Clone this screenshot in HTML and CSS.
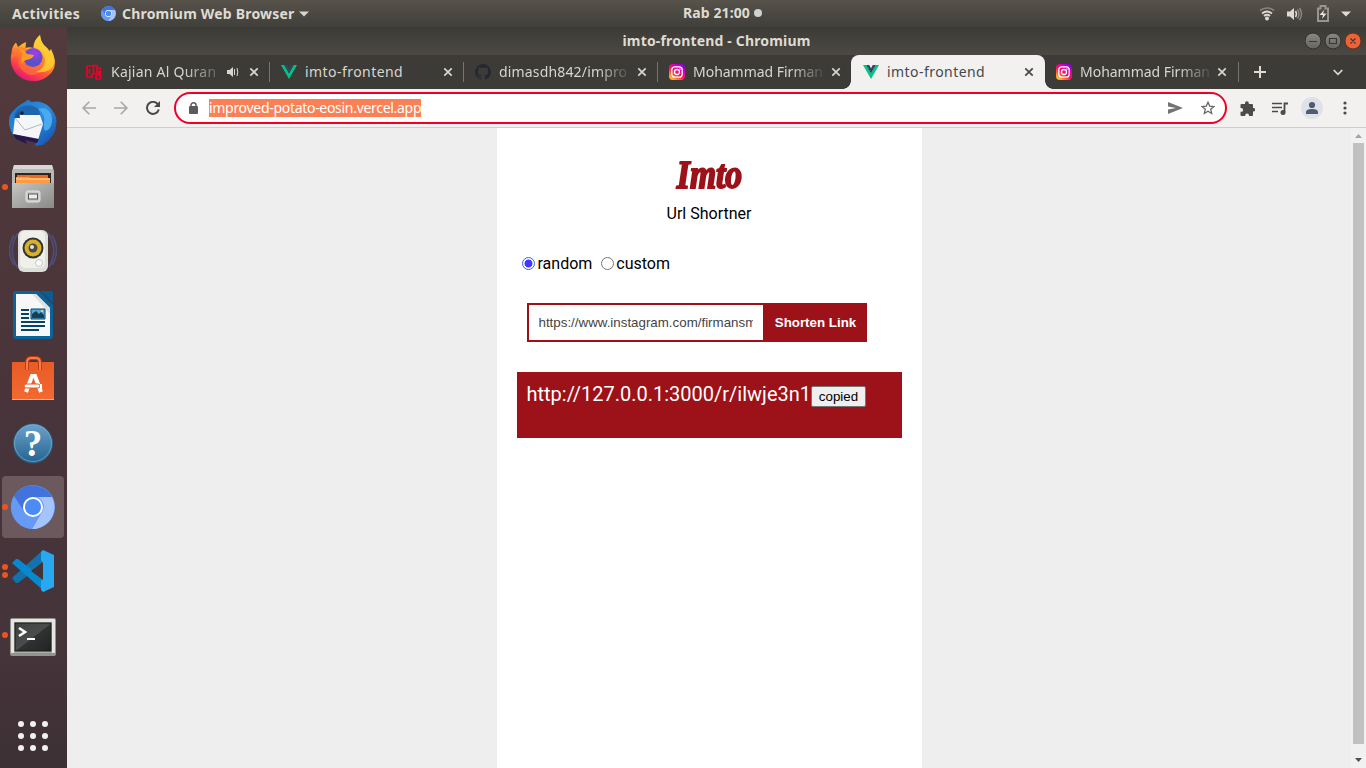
FILE: index.html
```html
<!DOCTYPE html>
<html lang="id">
<head>
<meta charset="utf-8">
<title>imto-frontend</title>
<link rel="stylesheet" href="styles.css">
</head>
<body>
<svg class="defs" width="0" height="0">
  <defs>
    <symbol id="chromium" viewBox="0 0 44 44">
      <circle cx="22" cy="22" r="22" fill="#5b93f5"/>
      <path d="M3 11A22 22 0 0 1 41 12H22a10 10 0 0 0-9 14Z" fill="#4272db"/>
      <path d="M41 12A22 22 0 0 1 21 44L31 27a10 10 0 0 0-5-15Z" fill="#a5c4fb"/>
      <path d="M3 11A22 22 0 0 0 21 44L30.500 27 13 27Z" fill="#669af5"/>
      <circle cx="22" cy="22" r="10" fill="#fff"/><circle cx="22" cy="22" r="8" fill="#4b8bf5"/>
    </symbol>
    <symbol id="vue" viewBox="0 0 16 16"><path d="M0 1h3.300L8 9.200 12.700 1H16L8 15Z" fill="#00c583"/><path d="M3.200 1h3L8 4.200 9.800 1h3L8 9.400Z" fill="#31475e"/></symbol>
    <linearGradient id="ig1" x1="0" y1="1" x2=".75" y2="0"><stop offset="0" stop-color="#ffe13c"/><stop offset=".28" stop-color="#ff7a28"/><stop offset=".52" stop-color="#ff0b63"/><stop offset=".78" stop-color="#d800b5"/><stop offset="1" stop-color="#8b00dc"/></linearGradient>
    <symbol id="instagram" viewBox="0 0 16 16"><rect width="16" height="16" rx="4" fill="url(#ig1)"/><rect x="2.800" y="2.800" width="10.400" height="10.400" rx="3" fill="none" stroke="#fff" stroke-width="1.300"/><circle cx="8" cy="8" r="2.500" fill="none" stroke="#fff" stroke-width="1.300"/><circle cx="11" cy="5" r=".7" fill="#fff"/></symbol>
    <symbol id="close" viewBox="0 0 10 10"><path d="M1.300 1.300l7.400 7.400M8.700 1.300L1.300 8.700" stroke="currentColor" stroke-width="1.700"/></symbol>
    <linearGradient id="ff" x1=".8" y1="0" x2=".3" y2="1"><stop offset="0" stop-color="#fff44f"/><stop offset=".4" stop-color="#ffb027"/><stop offset=".68" stop-color="#ff5836"/><stop offset="1" stop-color="#e6107c"/></linearGradient>
    <radialGradient id="ffp" cx=".6" cy=".25"><stop offset="0" stop-color="#a63bea"/><stop offset="1" stop-color="#5950cf"/></radialGradient>
    <linearGradient id="tb" x1="0" y1="0" x2="1" y2="1"><stop offset="0" stop-color="#1a72bd"/><stop offset=".5" stop-color="#2e8ee0"/><stop offset="1" stop-color="#1247a4"/></linearGradient>
    <linearGradient id="metal" x1="0" y1="0" x2="1" y2="1"><stop offset="0" stop-color="#c5c5c3"/><stop offset="1" stop-color="#898987"/></linearGradient>
    <linearGradient id="orange" x1="0" y1="0" x2="0" y2="1"><stop offset="0" stop-color="#e95b25"/><stop offset="1" stop-color="#f26a31"/></linearGradient>
    <linearGradient id="blue" x1="0" y1="0" x2="0" y2="1"><stop offset="0" stop-color="#6aa3cd"/><stop offset="1" stop-color="#25628f"/></linearGradient>
    <linearGradient id="dark" x1="0" y1="0" x2="1" y2="1"><stop offset="0" stop-color="#3f4140"/><stop offset=".5" stop-color="#4b4d4c"/><stop offset=".52" stop-color="#303231"/><stop offset="1" stop-color="#222"/></linearGradient>
  </defs>
</svg>

<header class="panel">
  <div class="panel-left">
    <span class="activities">Activities</span>
    <svg class="app-icon" width="15" height="15"><use href="#chromium"/></svg>
    <span class="app-name">Chromium Web Browser</span>
    <svg width="10" height="6"><path d="M0 .5h10L5 5.500Z" fill="#d5d4cf"/></svg>
  </div>
  <div class="clock"><span>Rab 21:00</span><i class="dot"></i></div>
  <div class="tray">
    <svg width="16" height="16" viewBox="0 0 16 16" fill="none" stroke-width="1.700"><path d="M1 4.500q7-5 14 0" stroke="#85847f"/><path d="M3 7.500q5-4 10 0M5 10q3-2.500 6 0" stroke="#dfdbd2"/><circle cx="8" cy="12.500" r="2" fill="#dfdbd2"/></svg>
    <svg width="17" height="16" viewBox="0 0 17 16" fill="none"><path d="M1 5.500h3L8 2v12l-4-3.500H1Z" fill="#dfdbd2"/><path d="M9.500 5q2 3 0 6" stroke="#dfdbd2" stroke-width="1.500"/><path d="M11.500 3.500q3 4.500 0 9M13.500 2q4 6 0 12" stroke="#8b8982" stroke-width="1.400"/></svg>
    <svg width="12" height="17" viewBox="0 0 12 17"><path d="M1 3.500h2.500V1h5v2.500H11V16H1Z" fill="none" stroke="#96958f" stroke-width="2"/><path d="M7.500 4.500L2.500 10H6l-1 4L9.500 8.500H6Z" fill="#eeeae2"/></svg>
    <svg width="10" height="6"><path d="M0 .5h10L5 5.500Z" fill="#dfdbd2"/></svg>
  </div>
</header>

<div class="desktop">
  <nav class="dock">
    <div class="launcher"><svg width="48" height="48" viewBox="0 0 48 48"><path d="M2.500 18Q3 11 7 7.500L9 12q3-3 8-5l-.5 6q3-1.500 8 0Q24 6 31 0q1 8 6 12 3 2 3 5l2-3q9 18-3 27-7 6-16 5C10 46 0 34 2 20Z" fill="url(#ff)"/><path d="M2 24Q3 13 10 12q7 0 15 6l6-1q9 9 1 19-9 8-18 0-8-7-2-18Z" fill="#ff7434" opacity=".65"/><circle cx="24" cy="22.500" r="9.500" fill="url(#ffp)"/><path d="M9 12q6 2 9 7l7 1q-1 4-8 5-3 1-4 4-2-7 1-10Z" fill="#ff9c22"/><path d="M31 0q-8 8-4 13 8 1 9 9 1 12-9 15 14 2 18-8Q48 22 37 12q-6-4-6-12Z" fill="#ffcb32" opacity=".85"/></svg></div>
    <div class="launcher"><svg width="48" height="48" viewBox="0 0 48 48"><path d="M16 3q3-4 6 0 17-3 25 15 3 17-13 28l-8 1 3-8L4 36Q-2 25 1 16q6-9 15-13Z" fill="url(#tb)"/><path d="M15 7q10-2 15 4l3 12-18 7L5 16q3-7 10-9Z" fill="#1f64ad"/><path d="M29 10q8 5 6 15-1 10 5 5 5-6 2-15Q38 7 29 10Z" fill="#4aaaf0"/><path d="M6 18l5-2 20 0 3 9-5 16L4 35Z" fill="#f5f6f7"/><path d="M6 19l10 12 17-6" fill="none" stroke="#b3b7bd"/><path d="M4 35l26 5-2 4-12-3 2 4-11-5Z" fill="#251750"/><circle cx="13" cy="14" r="1.800" fill="#211c40"/><path d="M5 19l5-7 1 7Z" fill="#17508f"/></svg></div>
    <div class="launcher running"><svg width="48" height="48" viewBox="0 0 48 48"><path d="M5 2h38l2 6v37H3V8Z" fill="#b8b8b6"/><path d="M5 2h38l1 4H4Z" fill="#d8d8d6"/><path d="M6 10h36v10H6Z" fill="#30251f"/><path d="M8 12h31v7H8Z" fill="#e96c1c"/><path d="M7 14h13l2 1h19v5H7Z" fill="#ff9b43"/><path d="M7 16h34" stroke="#ffd5a4"/><path d="M3 20h42v25H3Z" fill="url(#metal)"/><rect x="17" y="28" width="14" height="11" rx="2" fill="#c9c9c7" stroke="#e4e4e2"/><rect x="19.500" y="31" width="9" height="5" fill="#eee" stroke="#555"/></svg></div>
    <div class="launcher"><svg width="48" height="48" viewBox="0 0 48 48"><path d="M5 8Q-4 24 5 38M9 6Q-2 23 8 40M43 8q9 16 0 30M39 6q11 17 1 34" fill="none" stroke="#4c4f78" stroke-width="1.600"/><rect x="9" y="3" width="30" height="42" rx="6" fill="#deded9"/><rect x="11" y="4" width="25" height="37" rx="5" fill="#efefeb"/><circle cx="24" cy="21" r="10.500" fill="#343432"/><circle cx="24" cy="21" r="8.500" fill="#d8b02b"/><circle cx="24" cy="21" r="4.500" fill="#4b4c49"/><circle cx="23" cy="20" r="2" fill="#e5e5df"/><circle cx="30" cy="36" r="3.500" fill="#fafaf8" stroke="#c6c6c2"/></svg></div>
    <div class="launcher"><svg width="48" height="48" viewBox="0 0 48 48"><path d="M6 0h24l14 14v31q0 3-3 3H7q-3 0-3-3V3q0-3 2-3Z" fill="#08649b"/><path d="M31 0h11q2 0 2 2v10Z" fill="#095c94"/><path d="M7 3h20l14 14v28H7Z" fill="#f7f7f7"/><path d="M27 3l14 14V23L23 3Z" fill="#e0e0e0"/><path d="M12 19h8M12 23h8M12 27h8M12 31h24M12 35h24M12 39h18" stroke="#064465" stroke-width="2"/><path d="M22 18h14v10H22Z" fill="#53a8db" stroke="#064465"/><path d="M23 27v-4l4-3 3 3 2-2 3 3v3Z" fill="#173e52"/><circle cx="33" cy="20" r="1" fill="#ffe45e"/></svg></div>
    <div class="launcher"><svg width="48" height="48" viewBox="0 0 48 48"><path d="M3 7h42v38H3Z" fill="url(#orange)"/><path d="M18 15V8q0-5 4-5h5q4 0 4 5v7" fill="none" stroke="#b93e12" stroke-width="4"/><path d="M18 15V8q0-5 4-5h5q4 0 4 5v7" fill="none" stroke="#ff7950" stroke-width="2"/><path d="M3 44.500h42" stroke="#ffa681"/><path d="M17 37l6-16h3l6 16" fill="none" stroke="#fff" stroke-width="4"/><rect x="15" y="29" width="16" height="4" rx="2" fill="#fff" stroke="#e95420"/><path d="M31 29h2v4h-2Z" fill="#fff"/></svg></div>
    <div class="launcher"><svg width="48" height="48" viewBox="0 0 48 48"><circle cx="24" cy="24.500" r="19.500" fill="url(#blue)" stroke="#286087"/><circle cx="24" cy="24" r="18.500" fill="none" stroke="#8ab4d1" opacity=".6"/><text class="help-mark" x="24" y="37" text-anchor="middle">?</text></svg></div>
    <div class="launcher running active"><svg width="44" height="44"><use href="#chromium"/></svg></div>
    <div class="launcher running double"><svg width="48" height="48" viewBox="0 0 48 48"><path d="M34 3L3 31l4 5h2L35 16Z" fill="#1372ae"/><path d="M3 16l4-4h2l27 21v12Z" fill="#0788cf"/><path d="M34 3l11 5v32l-11 5-2-2V34l2-3V17l-2-4V5Z" fill="#29a8f2"/><path d="M34 15v18L22 24Z" fill="#453237"/></svg></div>
    <div class="launcher running"><svg class="terminal" width="48" height="48" viewBox="0 0 48 48"><rect x="1" y="6" width="46" height="38" rx="2" fill="#92928f"/><rect x="2" y="7" width="44" height="34" rx="1" fill="#e5e5e2"/><rect x="5" y="10" width="38" height="31" fill="#adaeab"/><rect x="6" y="11" width="36" height="28" fill="url(#dark)" stroke="#191b1a"/><path d="M10 16l6 4-6 4" fill="none" stroke="#fff" stroke-width="2.600"/><path d="M18 27h8" stroke="#fff" stroke-width="2"/></svg></div>
    <div class="app-grid"><i></i><i></i><i></i><i></i><i></i><i></i><i></i><i></i><i></i></div>
  </nav>

  <section class="browser">
    <div class="titlebar">
      <span>imto-frontend - Chromium</span>
      <svg class="window-buttons" width="56" height="18" viewBox="0 0 56 18"><defs><linearGradient id="gb" x1="0" y1="0" x2="0" y2="1"><stop stop-color="#8a8780"/><stop offset="1" stop-color="#666560"/></linearGradient></defs><g stroke="#30302d" fill="url(#gb)"><circle cx="8" cy="9" r="8"/><circle cx="28" cy="9" r="8"/><circle cx="48" cy="9" r="8" fill="#ed6335" stroke="#63311f"/></g><path d="M4 9.500h8M24.500 6.500h7v5h-7ZM45.500 6.500l5 5M50.500 6.500l-5 5" fill="none" stroke="#393832" stroke-width="1.200"/></svg>
    </div>
    <div class="tabs">
      <div class="tab first"><svg width="16" height="16" viewBox="0 0 16 16" fill="none" stroke="#ed0028" stroke-width="1.700"><path d="M5.500 2H1v11h5V9.500M3.500 5v5M6 1.500h5V13M7.500 2v8H11M14.500 4v11H10v-3M11 4h3.500M13 7v5"/></svg><span class="label">Kajian Al Quran</span><svg class="audio" width="12" height="10" viewBox="0 0 12 10"><path d="M0 3h2.500L6 0v10L2.500 7H0Z" fill="currentColor"/><path d="M7.500 2v6M10 1q1.500 4 0 8" stroke="currentColor" fill="none"/></svg><svg class="x" width="10" height="10"><use href="#close"/></svg></div>
      <div class="tab"><svg width="16" height="16"><use href="#vue"/></svg><span class="label">imto-frontend</span><svg class="x" width="10" height="10"><use href="#close"/></svg></div>
      <div class="tab"><svg width="16" height="16" viewBox="0 0 16 16"><path fill="#24292f" d="M8 0a8 8 0 0 0-2.500 15.600c.4.100.5-.2.500-.4v-1.500c-2.200.5-2.700-1-2.700-1-.4-.9-.9-1.200-.9-1.200-.7-.5.1-.5.1-.5.800.1 1.200.8 1.200.8.700 1.200 1.900.9 2.400.7.100-.5.300-.9.500-1.100-1.800-.2-3.700-.9-3.700-4 0-.9.300-1.600.8-2.100-.1-.2-.4-1 .1-2.100 0 0 .7-.2 2.200.8a7.500 7.500 0 0 1 4 0c1.500-1 2.200-.8 2.200-.8.500 1.100.2 1.900.1 2.100.5.500.8 1.300.8 2.100 0 3.100-1.900 3.700-3.700 3.900.3.300.6.800.6 1.500v2.400c0 .2.100.5.500.4A8 8 0 0 0 8 0Z"/></svg><span class="label repo">dimasdh842/impro</span><svg class="x" width="10" height="10"><use href="#close"/></svg></div>
      <div class="tab before-active"><svg width="16" height="16"><use href="#instagram"/></svg><span class="label person">Mohammad Firman</span><svg class="x" width="10" height="10"><use href="#close"/></svg></div>
      <div class="tab selected"><svg width="16" height="16"><use href="#vue"/></svg><span class="label">imto-frontend</span><svg class="x" width="10" height="10"><use href="#close"/></svg></div>
      <div class="tab last"><svg width="16" height="16"><use href="#instagram"/></svg><span class="label person">Mohammad Firman</span><svg class="x" width="10" height="10"><use href="#close"/></svg></div>
      <svg class="new-tab" width="12" height="12"><path d="M6 0v12M0 6h12" stroke="#dfdbd2" stroke-width="2"/></svg>
      <svg class="tab-menu" width="10" height="7"><path d="M.7 1L5 5.300 9.300 1" fill="none" stroke="#dfdbd2" stroke-width="1.700"/></svg>
    </div>
    <div class="toolbar">
      <div class="navigation">
        <svg width="14" height="14" viewBox="0 0 14 14" fill="none" stroke="#a7a7a6" stroke-width="1.600"><path d="M14 7H1M7.300.8L1.100 7l6.200 6.200"/></svg>
        <svg width="14" height="14" viewBox="0 0 14 14" fill="none" stroke="#a7a7a6" stroke-width="1.600"><path d="M0 7h13M6.700.8L12.900 7l-6.200 6.200"/></svg>
        <svg width="14" height="14" viewBox="0 0 14 14"><path d="M12 3.500A6 6 0 1 0 12.800 8.500" fill="none" stroke="#484846" stroke-width="2"/><path d="M14 0v6H8Z" fill="#484846"/></svg>
      </div>
      <div class="address">
        <svg class="lock" width="9" height="12"><path d="M2 5V3.300a2.500 2.500 0 0 1 5 0V5" fill="none" stroke="#595b60" stroke-width="1.500"/><rect y="4" width="9" height="8" rx="1" fill="#595b60"/></svg>
        <span class="url"><span>improved-potato-eosin.vercel.app</span></span>
        <svg class="send" width="15" height="12"><path d="M0 0l15 6-15 6V7.500L8 6 0 4.500Z" fill="#737373"/></svg>
        <svg class="star" width="14" height="14" viewBox="0 0 14 14"><path d="M7 1.200l1.700 3.900 4.200.4-3.200 2.800 1 4.200L7 10.300l-3.700 2.200 1-4.200L1.100 5.500l4.200-.4Z" fill="none" stroke="#666" stroke-width="1.300"/></svg>
      </div>
      <svg class="extensions" width="15" height="15" viewBox="0 0 15 15"><path d="M1.500 3H5V2.200a1.900 1.900 0 0 1 3.800 0V3H12q1 0 1 1v3h.4a1.800 1.800 0 0 1 0 3.600H13V14q0 1-1 1H9v-.7a1.900 1.900 0 0 0-3.800 0v.7H1.500q-1 0-1-1v-3.200h.7a1.900 1.900 0 0 0 0-3.800H.5V4q0-1 1-1Z" fill="#4b4b4a"/></svg>
      <svg class="media" width="16" height="13" viewBox="0 0 16 13"><path d="M0 1.500h10M0 5.500h10M0 9.500h6" stroke="#4b4b4a" stroke-width="1.600"/><path d="M12.500 10V1.500H16" fill="none" stroke="#4b4b4a" stroke-width="1.800"/><circle cx="11" cy="10.400" r="2.500" fill="#4b4b4a"/></svg>
      <svg class="profile" width="22" height="22"><circle cx="11" cy="11" r="11" fill="#dfe1e8"/><circle cx="11" cy="8" r="3.100" fill="#505a73"/><path d="M5 17v-1.500C5 12.500 8 12 11 12s6 .5 6 3.500V17Z" fill="#505a73"/></svg>
      <svg class="more" width="4" height="14" fill="#4b4b4a"><circle cx="2" cy="2" r="1.600"/><circle cx="2" cy="7" r="1.600"/><circle cx="2" cy="12" r="1.600"/></svg>
    </div>
    <div class="viewport">
      <main class="page">
        <h1>Imto</h1>
        <p class="subtitle">Url Shortner</p>
        <div class="choices"><label><input type="radio" name="mode" checked>random</label><label><input type="radio" name="mode">custom</label></div>
        <form class="shorten"><input type="text" value="https://www.instagram.com/firmansmith"><button type="button">Shorten Link</button></form>
        <div class="result"><span>http://127.0.0.1:3000/r/ilwje3n1</span><button type="button">copied</button></div>
      </main>
      <div class="scrollbar"><svg width="7" height="4"><path d="M0 4L3.500 0 7 4Z" fill="#a3a3a3"/></svg><i></i><svg width="7" height="4"><path d="M0 0h7L3.500 4Z" fill="#505050"/></svg></div>
    </div>
  </section>
</div>
</body>
</html>
```
FILE: styles.css
```css
* { box-sizing: border-box; }
body { margin: 0; width: 1366px; height: 768px; overflow: hidden; font-family: "Noto Sans", sans-serif; background: #eee; }
svg { display: block; flex: none; }
.defs { position: absolute; }
.panel { height: 27px; display: grid; grid-template-columns: 606px auto 1fr; align-items: center; background: linear-gradient(#57534b, #403f3a); color: #dfdbd2; font-size: 14px; font-weight: 700; line-height: 20px; }
.panel-left { display: flex; align-items: center; padding-left: 12px; white-space: nowrap; }
.activities { width: 89px; letter-spacing: .3px; }
.app-icon { margin-right: 6px; }
.app-name { width: 177px; letter-spacing: .2px; }
.clock { display: flex; align-items: center; gap: 4px; margin-left: 77px; padding-bottom: 1px; letter-spacing: .1px; }
.clock .dot { width: 8px; height: 8px; border-radius: 50%; background: #d2d1ce; }
.tray { display: flex; justify-content: flex-end; align-items: center; padding-right: 15px; }
.tray svg:nth-child(1) { margin-right: 11px; }
.tray svg:nth-child(2) { margin-right: 14px; }
.tray svg:nth-child(3) { margin-right: 12px; }

.desktop { display: flex; height: 741px; }
.dock { width: 67px; flex: none; background: linear-gradient(#533a3c, #48343a 50%, #45343a 85%, #3c3034); }
.launcher { position: relative; height: 64px; display: flex; align-items: center; justify-content: center; padding-right: 1px; }
.launcher:first-child svg { margin-top: -1px; }
.launcher.active { height: 62px; width: 62px; margin: 1px 2px; padding: 0; border-radius: 4px; background: #6b595d; }
.terminal { margin-top: 2px; }
.running::before { content: ""; position: absolute; left: 2px; top: 29px; width: 6px; height: 6px; border-radius: 50%; background: #e95420; }
.active::before { left: 0; top: 28px; }
.double::before { top: 25px; box-shadow: 0 8px #e95420; }
.help-mark { font: 700 37px "Liberation Serif", serif; fill: #fff; }
.app-grid { display: grid; grid-template-columns: repeat(3, 6px); gap: 6px; padding: 54px 0 0 18px; }
.app-grid i { width: 6px; height: 6px; border-radius: 50%; background: #f2f1f0; }

.browser { flex: 1; min-width: 0; display: flex; flex-direction: column; }
.titlebar { height: 28px; flex: none; display: grid; grid-template-columns: 1fr auto 1fr; align-items: center; background: linear-gradient(#3b3b36, #4c4944); color: #dfdbd2; font-size: 14px; font-weight: 700; }
.titlebar span { grid-column: 2; letter-spacing: .17px; padding-bottom: 2px; }
.window-buttons { justify-self: end; margin-right: 5px; }
.tabs { height: 34px; flex: none; display: flex; align-items: center; background: #3c3b37; color: #d9d6ce; font-size: 14px; }
.tab { width: 194px; height: 34px; display: flex; align-items: center; padding: 0 11px; background: linear-gradient(#77756e, #77756e) right center / 1px 20px no-repeat; }
.tab.first { width: 203px; padding-left: 19px; }
.tab.before-active { background: none; }
.tab.selected { position: relative; margin-left: -1px; padding-left: 12px; color: #45484a; background: #f2f1f0; border-radius: 8px 8px 0 0; }
.tab.last { padding-right: 12px; }
.tab.selected::before, .tab.selected::after { content: ""; position: absolute; bottom: 0; width: 8px; height: 8px; }
.tab.selected::before { left: -8px; background: radial-gradient(circle at 0 0, transparent 7.500px, #f2f1f0 8px); }
.tab.selected::after { right: -8px; background: radial-gradient(circle at 100% 0, transparent 7.500px, #f2f1f0 8px); }
.label { width: 130px; margin-left: 8px; white-space: nowrap; letter-spacing: .44px; line-height: 20px; }
.first .label { width: 108px; margin-left: 9px; letter-spacing: .24px; -webkit-mask-image: linear-gradient(90deg, #000 72px, transparent 118px); mask-image: linear-gradient(90deg, #000 72px, transparent 118px); }
.label.repo { letter-spacing: .16px; }
.label.person { letter-spacing: -.02px; }
.label.repo, .label.person { -webkit-mask-image: linear-gradient(90deg, #000 98px, transparent 134px); mask-image: linear-gradient(90deg, #000 98px, transparent 134px); }
.audio { margin-left: 8px; }
.x { margin-left: auto; }
.new-tab { margin-left: 15px; }
.tab-menu { margin: 0 23px 0 auto; }
.toolbar { height: 39px; flex: none; display: flex; align-items: center; background: #f2f1f0; border-bottom: 1px solid #cfcecc; }
.navigation { display: flex; gap: 18px; padding-left: 15px; width: 107px; }
.address { width: 1053px; height: 32px; border: 2px solid #ef0027; border-radius: 16px; background: #fff; display: flex; align-items: center; padding: 0 10px 0 13px; }
.url { flex: 1; margin-left: 11px; font-size: 14px; line-height: 18px; color: #fff; letter-spacing: -.3px; white-space: nowrap; }
.url span { display: inline-block; width: 212px; background: #fb8055; }
.send { margin-right: 18px; }
.extensions { margin-left: 13px; }
.media { margin-left: 17px; }
.profile { margin-left: 13px; }
.more { margin-left: 20px; }

.viewport { flex: 1; display: flex; justify-content: space-between; background: #eee; }
.page { width: 425px; margin-left: 430px; padding: 0 20px; background: #fff; font: 16px/19px Roboto, sans-serif; color: #000; }
h1 { margin: 23px 0 0; height: 53px; text-align: center; color: #9d1119; font: italic 700 40px/48px "Liberation Serif", serif; -webkit-text-stroke: 2px #9d1119; transform: scaleX(.84); }
.subtitle { margin: 0; padding-right: 1px; text-align: center; }
.choices { display: flex; gap: 9px; margin-top: 31px; padding-left: 5px; }
.choices label { display: flex; align-items: center; gap: 2.500px; }
.choices label + label { margin-left: -.5px; }
.choices input { appearance: none; width: 13px; height: 13px; margin: -1px 0 0; border: 1px solid #767676; border-radius: 50%; background: #fff; }
.choices input:checked { border-color: #3568df; background: radial-gradient(circle, #4637ff 3.700px, transparent 4.300px); }
.shorten { display: flex; margin: 30px 0 0 10px; height: 39px; width: 340px; }
.shorten input { width: 238px; height: 39px; border: 2px solid #9d1119; padding: 10px 10px 10px 9.500px; border-radius: 0; font: 13.333px "Liberation Sans", Arial, sans-serif; color: #444; background: #fff; }
.shorten button { flex: 1; border: 0; padding: 0 1px 0 0; background: #9d1119; color: #fff; font: 700 13.333px "Liberation Sans", Arial, sans-serif; }
.result { height: 66px; margin-top: 30px; padding: 10px 10px 10px 9.500px; background: #9d1119; color: #fff; font-size: 20px; line-height: 24px; display: flex; align-items: flex-start; white-space: nowrap; }
.result span { width: 284.500px; }
.result button { width: 55px; height: 21px; margin-top: 4px; padding: 1px 0; border: 1px solid #767676; border-radius: 2px; background: #efefef; color: #000; font: 13.333px "Liberation Sans", Arial, sans-serif; }
.scrollbar { width: 15px; background: #f1f1f1; display: flex; flex-direction: column; align-items: center; padding: 6px 0; gap: 5px; }
.scrollbar i { width: 11px; height: 601px; background: #c1c1c1; }
.scrollbar svg:last-child { margin-top: auto; }
```
